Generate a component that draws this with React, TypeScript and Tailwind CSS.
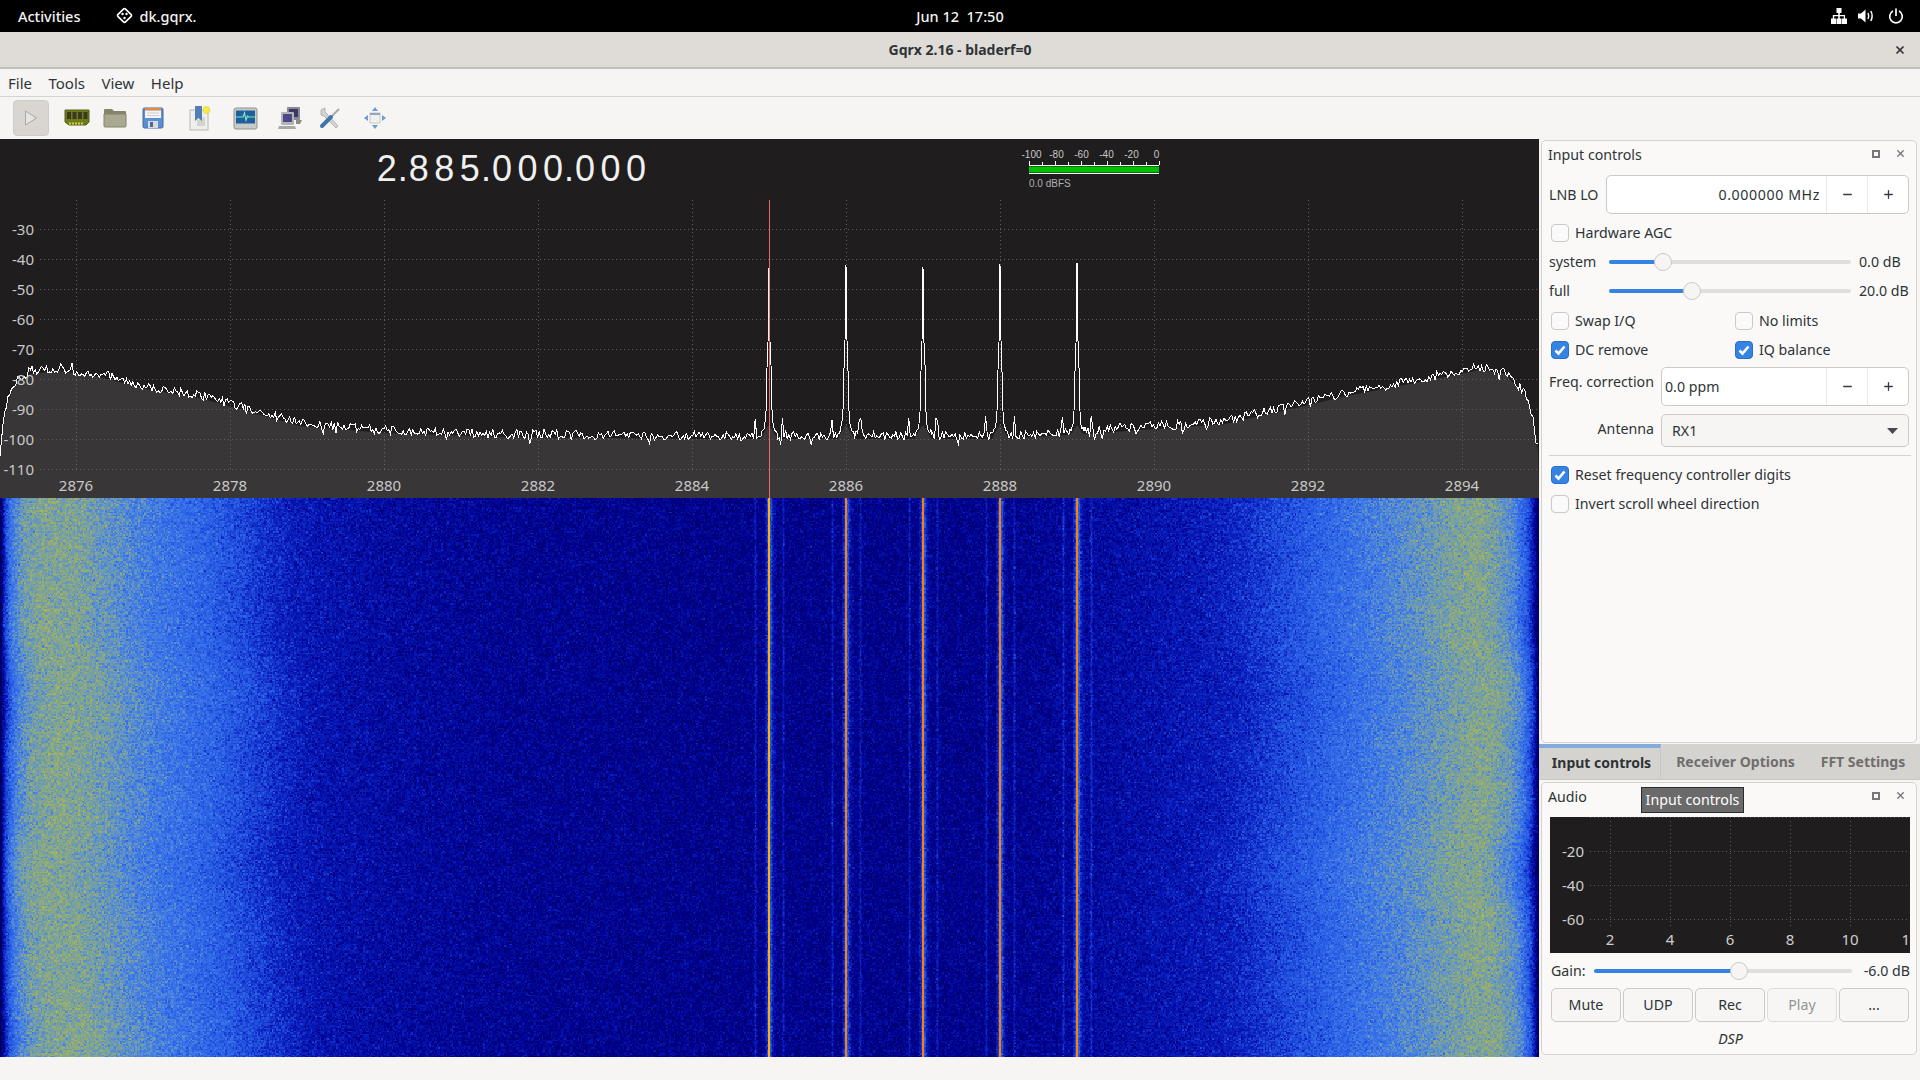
import { useEffect, useRef } from "react";
import { Minus, Plus, X } from "lucide-react";

const CARRIERS = [
  { x: 769, tip: 268 },
  { x: 846, tip: 265 },
  { x: 923, tip: 267 },
  { x: 1000, tip: 264 },
  { x: 1077, tip: 263 },
];

const ENVELOPE: [number, number][] = [
  [0, 453], [3, 425], [7, 403], [15, 382], [30, 372], [60, 369], [100, 375], [150, 388],
  [200, 396], [250, 410], [300, 424], [384, 431], [500, 435], [700, 437], [1000, 437],
  [1100, 431], [1225, 422], [1347, 394], [1420, 380], [1480, 368], [1505, 372], [1517, 385],
  [1528, 398], [1533, 420], [1536, 440], [1539, 452],
];

const makeRandom = (seed: number) => () => {
  seed = (seed + 0x6d2b79f5) | 0;
  let t = Math.imul(seed ^ (seed >>> 15), 1 | seed);
  t = (t + Math.imul(t ^ (t >>> 7), 61 | t)) ^ t;
  return ((t ^ (t >>> 14)) >>> 0) / 4294967296;
};

const envY = (x: number) => {
  for (let i = 1; i < ENVELOPE.length; i++) {
    const [x0, y0] = ENVELOPE[i - 1];
    const [x1, y1] = ENVELOPE[i];
    if (x <= x1) return y0 + ((y1 - y0) * (x - x0)) / (x1 - x0);
  }
  return 452;
};

// one trace sample, snapped so each carrier gets its own spike
const buildTrace = () => {
  const rnd = makeRandom(7);
  const xs: number[] = [];
  for (let x = 0; x < 1539; x += 1.6) {
    if (!CARRIERS.some((c) => Math.abs(x - c.x) < 8)) xs.push(x);
  }
  CARRIERS.forEach((c) => {
    for (let d = -8; d <= 8; d++) xs.push(c.x + d);
  });
  xs.sort((a, b) => a - b);
  const trace = xs.map((x) => {
    let y = envY(x) - 1 + (rnd() - 0.5) * 9;
    if (rnd() < 0.07) y += (rnd() - 0.35) * 13;
    CARRIERS.forEach((c) => {
      const d = Math.abs(x - c.x);
      if (d < 0.5) y = c.tip;
      else if (d <= 1) y = 340 + rnd() * 4;
      else if (d <= 2) y = 364 + rnd() * 8;
      else if (d <= 3) y = 409 + rnd() * 3;
      else if (d <= 8) y = Math.min(y, 437 - 22 * Math.exp(-(d - 3) / 3) + rnd() * 4);
      else if (Math.abs(d - 14) < 1) y = 416 + rnd() * 5;
    });
    return [x, y] as const;
  });
  return trace;
};

const TRACE = buildTrace();
const TRACE_POINTS = TRACE.map(([x, y]) => `${x.toFixed(1)},${y.toFixed(1)}`).join(" ");

const FILL_POINTS = (() => {
  const pts: string[] = ["0,498"];
  for (let x = 0; x <= 1539; x += 2) {
    let y = envY(x) + 2;
    CARRIERS.forEach((c) => {
      const d = Math.abs(x - c.x);
      if (d < 8) y = Math.min(y, 438 - 14 * (1 - d / 8));
    });
    pts.push(`${x},${y.toFixed(1)}`);
  }
  pts.push("1539,498");
  return pts.join(" ");
})();

const STOPS: [number, number, number, number][] = [
  [0, 0, 0, 70], [0.2, 0, 0, 140], [0.35, 10, 30, 190], [0.5, 35, 85, 225], [0.65, 60, 120, 235],
  [0.75, 100, 150, 195], [0.85, 140, 170, 125], [0.95, 170, 180, 90], [1, 190, 190, 70],
];

const colormap = (v: number) => {
  const t = Math.max(0, Math.min(1, v));
  for (let i = 1; i < STOPS.length; i++) {
    const a = STOPS[i - 1];
    const b = STOPS[i];
    if (t <= b[0]) {
      const f = (t - a[0]) / (b[0] - a[0]);
      return [a[1] + (b[1] - a[1]) * f, a[2] + (b[2] - a[2]) * f, a[3] + (b[3] - a[3]) * f];
    }
  }
  return [190, 190, 70];
};

const SPURS: Record<number, number> = {
  [-4]: 0.1, [-3]: 0.14, [-2]: 0.22, [-1]: 0.3, 1: 0.3, 2: 0.26, 3: 0.14, 4: 0.1, 5: 0.05,
  6: 0.04, 7: 0.03, [-13]: 0.07, [-14]: 0.14, [-15]: 0.06, 13: 0.07, 14: 0.13, 15: 0.06,
};

const Waterfall = () => {
  const ref = useRef<HTMLCanvasElement>(null);

  useEffect(() => {
    const canvas = ref.current;
    const ctx = canvas?.getContext("2d");
    if (!canvas || !ctx) return;
    const w = canvas.width;
    const h = canvas.height;
    const img = ctx.createImageData(w, h);
    const rnd = makeRandom(41);
    const gauss = () => (rnd() + rnd() + rnd() + rnd() - 2) * 0.9;
    const spurs = new Float32Array(w);
    const smooth = new Float32Array(w);
    for (let x = 0; x < w; x++) {
      CARRIERS.forEach((c) => {
        spurs[x] += SPURS[x - c.x] ?? 0;
      });
      const r = 18 * Math.min(1, x / 40, (w - x) / 40);
      smooth[x] = (envY(Math.max(0, x - r)) + envY(x) + envY(Math.min(w, x + r))) / 3;
    }
    const noise = new Float32Array(w);
    for (let row = 0; row < h; row++) {
      const wobble = Math.sin(row / 47) * 7 + Math.sin(row / 19 + 1) * 4;
      const fresh = row % 3 !== 1;
      let cell = 0;
      for (let x = 0; x < w; x++) {
        if (fresh) {
          if (x % 3 !== 1) cell = gauss();
          noise[x] = cell;
        }
        const fade = Math.min(1, x / 40, (w - x) / 40);
        const edge = x < 300 || x > 1200 ? wobble * fade : 0;
        const at = Math.max(0, Math.min(w - 1, Math.round(x + edge)));
        const base = 0.2 + (437 - smooth[at]) * 0.0094;
        const v = base + spurs[x] + noise[x] * 0.11;
        let [r, g, b] = colormap(v);
        const carrier = CARRIERS.findIndex((c) => x === c.x || x === c.x - 1);
        if (carrier === 0) [r, g, b] = [255, 176, 0];
        else if (carrier > 0) [r, g, b] = [255, 128, 0];
        const i = (row * w + x) * 4;
        img.data[i] = r;
        img.data[i + 1] = g;
        img.data[i + 2] = b;
        img.data[i + 3] = 255;
      }
    }
    ctx.putImageData(img, 0, 0);
  }, []);

  return <canvas ref={ref} width={1539} height={559} className="block w-[1539px] h-[559px]" />;
};

const Spectrum = () => {
  const dbs = [-30, -40, -50, -60, -70, -80, -90, -100, -110];
  const freqs = [2876, 2878, 2880, 2882, 2884, 2886, 2888, 2890, 2892, 2894];
  return (
    <svg width={1539} height={298} viewBox="0 200 1539 298" className="block bg-[#1f1d1e]">
      <polygon points={FILL_POINTS} fill="#383637" />
      <line x1={0} x2={1539} y1={199.5} y2={199.5} stroke="#5c5a5a" strokeDasharray="1 3" />
      {dbs.map((_, i) => (
        <line key={i} x1={40} x2={1539} y1={229.5 + i * 30} y2={229.5 + i * 30} stroke="#636161" strokeDasharray="1 3" />
      ))}
      {freqs.map((_, i) => (
        <line key={i} x1={76.5 + i * 154} x2={76.5 + i * 154} y1={200} y2={470} stroke="#636161" strokeDasharray="1 3" />
      ))}
      <polyline points={TRACE_POINTS} fill="none" stroke="#ffffff" strokeWidth={1} shapeRendering="crispEdges" />
      <line x1={769.5} x2={769.5} y1={200} y2={498} stroke="#ff7070" strokeWidth={1} opacity={0.9} />
      {dbs.map((db, i) => (
        <text key={db} x={34} y={234.5 + i * 30} textAnchor="end" fontSize={15} fill="#c9c8c8">
          {db}
        </text>
      ))}
      {freqs.map((f, i) => (
        <text key={f} x={76 + i * 154} y={491} textAnchor="middle" fontSize={15} fill="#c9c8c8">
          {f}
        </text>
      ))}
    </svg>
  );
};

const Meter = () => {
  const labels = [-100, -80, -60, -40, -20, 0];
  return (
    <svg width={150} height={61} viewBox="1020 139 150 61" className="block font-['Liberation_Sans',sans-serif]">
      {labels.map((l, i) => (
        <text key={l} x={1031.5 + i * 25} y={158} textAnchor="middle" fontSize={10} fill="#c8c8c8">
          {l}
        </text>
      ))}
      {Array.from({ length: 11 }, (_, i) => (
        <line key={i} x1={1029.5 + i * 13} x2={1029.5 + i * 13} y1={i % 2 ? 162 : 161} y2={165} stroke="#fff" />
      ))}
      <line x1={1029} x2={1159} y1={165.5} y2={165.5} stroke="#fff" />
      <rect x={1029} y={166.5} width={130} height={6} fill="#00c000" />
      <line x1={1029} x2={1159} y1={173.5} y2={173.5} stroke="#fff" />
      <text x={1029} y={187} fontSize={10} fill="#b0b0b0">
        0.0 dBFS
      </text>
    </svg>
  );
};

const FreqDisplay = () => (
  <div className="flex items-center -mt-[2px] text-[36px] leading-none text-[#f0f0f0] font-['Liberation_Sans',sans-serif]">
    {"2.885.000.000".split("").map((ch, i) =>
      ch === "." ? (
        <span key={i} className="w-[6.6px] flex justify-center">
          {ch}
        </span>
      ) : (
        <span key={i} className="w-[25.5px] flex justify-center">
          {ch}
        </span>
      ),
    )}
  </div>
);

const Check = ({ on, label, className = "" }: { on?: boolean; label: string; className?: string }) => (
  <div className={`flex items-center h-6 ${className}`}>
    <div
      className={`w-[18px] h-[18px] rounded-[4px] flex items-center justify-center ${
        on ? "bg-[#3584e4] border border-[#2a6fc4]" : "bg-[#fbfafa] border border-[#cdc9c4]"
      }`}
    >
      {on && (
        <svg width={14} height={14} viewBox="0 0 14 14">
          <path d="M2.5 7.5 L5.5 10.5 L11.5 3.5" fill="none" stroke="#fff" strokeWidth={2.6} />
        </svg>
      )}
    </div>
    <span className="ml-[6px] whitespace-nowrap">{label}</span>
  </div>
);

const Slider = ({ width, thumb }: { width: number; thumb: number }) => (
  <div className="relative h-1 rounded-full bg-[#e1dedb]" style={{ width }}>
    <div className="h-1 rounded-full bg-[#3584e4]" style={{ width: thumb }} />
    <div
      className="absolute top-[-7px] w-[18px] h-[18px] rounded-full bg-[#f6f5f4] border border-[#cdc9c4]"
      style={{ left: thumb - 9 }}
    />
  </div>
);

const SpinBox = ({ text, right, className = "" }: { text: string; right?: boolean; className?: string }) => (
  <div className={`h-[39px] flex rounded-[5px] border border-[#cdc9c4] bg-white overflow-hidden ${className}`}>
    <div className={`flex-1 flex items-center ${right ? "justify-end pr-[6px] tracking-[0.6px]" : "pl-[3px]"}`}>{text}</div>
    <div className="w-[41px] flex items-center justify-center border-l border-[#ebe9e7]">
      <Minus size={13} strokeWidth={2.4} className="text-[#3d3846]" />
    </div>
    <div className="w-[41px] flex items-center justify-center border-l border-[#ebe9e7]">
      <Plus size={13} strokeWidth={2.4} className="text-[#3d3846]" />
    </div>
  </div>
);

const DockTitle = ({ title }: { title: string }) => (
  <div className="flex items-center h-[29px] pl-[6px]">
    <span>{title}</span>
    <div className="ml-auto flex items-center pr-[10px] gap-[15px] mb-[2px]">
      <div className="w-[8px] h-[8px] border-2 border-[#77767b]" />
      <X size={11} strokeWidth={3} className="text-[#77767b]" />
    </div>
  </div>
);

const InputControls = () => (
  <div className="ml-[2px] w-[376px] h-[603px] mt-px rounded-[5px] border border-[#d6d3cf] bg-[#faf9f8] pl-[7px] flex flex-col">
    <div className="-ml-[7px] -mt-px">
      <DockTitle title="Input controls" />
    </div>
    <div className="mt-[6px] flex items-center w-[360px]">
      <span className="w-[57px]">LNB LO</span>
      <SpinBox text="0.000000 MHz" right className="flex-1" />
    </div>
    <Check label="Hardware AGC" className="mt-[7px] ml-[2px]" />
    <div className="mt-[5px] h-6 flex items-center">
      <span className="w-[60px]">system</span>
      <Slider width={242} thumb={54} />
      <span className="ml-[8px]">0.0 dB</span>
    </div>
    <div className="mt-[5px] h-6 flex items-center">
      <span className="w-[60px]">full</span>
      <Slider width={242} thumb={83} />
      <span className="ml-[8px]">20.0 dB</span>
    </div>
    <div className="mt-[6px] flex">
      <Check label="Swap I/Q" className="w-[184px] ml-[2px]" />
      <Check label="No limits" />
    </div>
    <div className="mt-[5px] flex">
      <Check on label="DC remove" className="w-[184px] ml-[2px]" />
      <Check on label="IQ balance" />
    </div>
    <div className="mt-[5px] flex w-[360px]">
      <span className="w-[112px] leading-[30px] whitespace-nowrap">Freq. correction</span>
      <SpinBox text="0.0 ppm" className="flex-1" />
    </div>
    <div className="mt-[8px] flex w-[360px]">
      <span className="w-[105px] text-right leading-[30px]">Antenna</span>
      <div className="ml-[7px] flex-1 h-[33px] flex items-center justify-between rounded-[5px] border border-[#cdc9c4] bg-[#f6f5f4] pl-[10px] pr-[10px]">
        <span>RX1</span>
        <svg width={11} height={6} viewBox="0 0 11 6">
          <path d="M0 0 H11 L5.5 6 Z" fill="#4a4850" />
        </svg>
      </div>
    </div>
    <div className="mt-[8px] h-px w-[362px] bg-[#d6d3cf]" />
    <Check on label="Reset frequency controller digits" className="mt-[7px] ml-[2px]" />
    <Check label="Invert scroll wheel direction" className="mt-[5px] ml-[2px]" />
  </div>
);

const Tabs = () => (
  <div className="mt-px h-[36px] flex bg-[#d5d3d0] text-[14px] font-bold border-b border-[#c9c6c2]">
    <div className="w-[122px] pl-[4px] pb-[2px] border-t-4 border-[#84abdd] border-r border-r-[#c9c6c2] text-[#2e3436] flex items-center justify-center">
      Input controls
    </div>
    <div className="w-[145px] pl-[4px] pb-px text-[#6f6e6d] pt-px flex items-center justify-center">Receiver Options</div>
    <div className="flex-1 text-[#6f6e6d] pb-px pt-px flex items-center justify-center">FFT Settings</div>
  </div>
);

const AudioPlot = () => (
  <svg width={360} height={136} viewBox="0 0 360 136" className="block bg-[#1f1d1e]">
    {[0, 34, 68, 102].map((y) => (
      <line key={y} x1={40} x2={360} y1={y + 0.5} y2={y + 0.5} stroke="#5f5d5d" strokeDasharray="1 3" />
    ))}
    {[60, 120, 180, 240, 300].map((x) => (
      <line key={x} x1={x + 0.5} x2={x + 0.5} y1={0} y2={112} stroke="#5f5d5d" strokeDasharray="1 3" />
    ))}
    {[-20, -40, -60].map((db, i) => (
      <text key={db} x={34} y={40 + i * 34} textAnchor="end" fontSize={15} fill="#cfcece">
        {db}
      </text>
    ))}
    {[2, 4, 6, 8, 10, 12].map((v, i) => (
      <text key={v} x={60 + i * 60} y={128} textAnchor="middle" fontSize={15} fill="#cfcece">
        {v}
      </text>
    ))}
  </svg>
);

const AudioPanel = () => (
  <div className="relative ml-[2px] mt-[2px] w-[376px] h-[273px] rounded-[5px] border border-[#d6d3cf] bg-[#faf9f8] flex flex-col">
    <div className="-mt-px">
      <DockTitle title="Audio" />
    </div>
    <div className="absolute left-[99px] top-[4px] w-[103px] h-[26px] flex items-center justify-center bg-[#6a6a6a] border border-[#2c2c2c] text-white">
      Input controls
    </div>
    <div className="mt-[6px] ml-[8px]">
      <AudioPlot />
    </div>
    <div className="mt-[6px] h-6 flex items-center pl-[9px]">
      <span className="w-[43px]">Gain:</span>
      <Slider width={258} thumb={145} />
      <span className="w-[58px] text-right whitespace-nowrap">-6.0 dB</span>
    </div>
    <div className="mt-[5px] ml-[9px] flex gap-[2px]">
      {["Mute", "UDP", "Rec", "Play", "..."].map((b) => (
        <div
          key={b}
          className={`w-[70px] h-[34px] flex items-center justify-center rounded-[5px] border bg-[#f7f6f5] ${
            b === "Play" ? "border-[#dedbd8] text-[#929595]" : "border-[#cdc9c4]"
          }`}
        >
          {b}
        </div>
      ))}
    </div>
    <div className="mt-[5px] pl-[3px] h-6 flex items-center justify-center italic">DSP</div>
  </div>
);

const RamIcon = () => (
  <svg width={26} height={18} viewBox="0 0 26 18" className="blur-[0.4px]">
    <path d="M1 1 H25 V13 L22 16 H5 L1 13 Z" fill="#6e7a1c" stroke="#55601a" />
    <rect x={3} y={3} width={4} height={7} fill="#3a3a20" />
    <rect x={8.5} y={3} width={4} height={7} fill="#3a3a20" />
    <rect x={14} y={3} width={4} height={7} fill="#3a3a20" />
    <rect x={19.5} y={3} width={4} height={7} fill="#3a3a20" />
    <path d="M5 14.5 H20" stroke="#d8d23a" strokeWidth={2} strokeDasharray="2 1" />
  </svg>
);

const FolderIcon = () => (
  <svg width={24} height={20} viewBox="0 0 24 20" className="blur-[0.4px]">
    <path d="M1 2 Q1 1 2 1 H9 L11 3 H22 Q23 3 23 4 V8 H1 Z" fill="#85836c" />
    <path d="M1 6 H23 V18 Q23 19 22 19 H2 Q1 19 1 18 Z" fill="#aaa88f" stroke="#85836c" />
  </svg>
);

const FloppyIcon = () => (
  <svg width={22} height={22} viewBox="0 0 22 22" className="blur-[0.4px]">
    <rect x={1} y={1} width={20} height={20} rx={1.5} fill="#5a8fd2" stroke="#44689f" />
    <rect x={3} y={1} width={16} height={2.5} fill="#e8883c" />
    <rect x={3} y={3.5} width={16} height={7.5} fill="#f4f4f2" />
    <path d="M5 6 H17 M5 8.5 H17" stroke="#cfcfcf" />
    <rect x={6} y={14} width={10} height={7} fill="#d8dadc" />
    <rect x={8} y={15} width={3} height={5} fill="#44689f" />
  </svg>
);

const BookmarkIcon = () => (
  <svg width={22} height={26} viewBox="0 0 22 26" className="blur-[0.4px]">
    <rect x={1} y={5} width={18} height={20} fill="#eeeeec" stroke="#b8b8b4" />
    <path d="M8 15 L16 12 V21 H8 Z" fill="#d2d2cf" />
    <path d="M6 1 H13 V16 L9.5 13 L6 16 Z" fill="#4f7fb4" />
    <circle cx={17.5} cy={5} r={3.5} fill="#f6ec3c" stroke="#e8d95a" />
  </svg>
);

const MonitorIcon = () => (
  <svg width={25} height={23} viewBox="0 0 25 23" className="blur-[0.4px]">
    <rect x={1} y={1} width={23} height={21} rx={2} fill="#c8ccc8" stroke="#8f938f" />
    <rect x={3} y={3.5} width={19} height={13} fill="#1f5f9c" />
    <path d="M3 10 H10 L11.5 6 L13 13 L14.5 9 L15.5 10 H22" fill="none" stroke="#7fe3c0" strokeWidth={1.2} />
  </svg>
);

const NetworkIcon = () => (
  <svg width={25} height={25} viewBox="0 0 25 25" className="blur-[0.4px]">
    <rect x={9} y={1} width={13} height={13} rx={1} fill="#8a8a90" />
    <rect x={11} y={3} width={9} height={8} fill="#3b3768" />
    <rect x={3} y={6} width={13} height={13} rx={1} fill="#b4b4b8" />
    <rect x={5} y={8} width={9} height={8} fill="#4c4788" />
    <path d="M1 20 H17 L18 23 H0 Z" fill="#a9a9a4" />
    <path d="M18 14 H24 L22 18 H18 Z" fill="#8d8d88" />
  </svg>
);

const ToolsIcon = () => (
  <svg width={22} height={22} viewBox="0 0 22 22" className="blur-[0.4px]">
    <path d="M2 3 L6 1 L6 5 L8 7 L19 19 L17 21 L5 9 L2 8 Z" fill="#d3d5d3" stroke="#9b9d9b" strokeWidth={0.7} />
    <path d="M20 2 L13 9" stroke="#a8aaa8" strokeWidth={2} />
    <path d="M12 10 L3 19" stroke="#3f74ad" strokeWidth={4} strokeLinecap="round" />
  </svg>
);

const MoveIcon = () => (
  <svg width={22} height={22} viewBox="0 0 22 22" className="blur-[0.4px]">
    <rect x={6} y={6} width={10} height={10} fill="#f0f0ee" stroke="#c9c9c5" />
    <rect x={6} y={6} width={10} height={2} fill="#8fa6c0" />
    <path d="M11 0 L14 4 H8 Z M11 22 L14 18 H8 Z M0 11 L4 8 V14 Z M22 11 L18 8 V14 Z" fill="#6b9bd2" />
  </svg>
);

const Toolbar = () => (
  <div className="h-[42px] flex items-center bg-[#f6f5f4]">
    <div className="ml-[13px] w-[36px] h-[36px] rounded-[4px] bg-[#d9d6d2] border border-[#cfccc8] flex items-center justify-center">
      <svg width={14} height={16} viewBox="0 0 14 16">
        <path d="M1.5 1 L12.5 8 L1.5 15 Z" fill="#e6e4e1" stroke="#a9a7a4" />
      </svg>
    </div>
    <div className="ml-[15px] flex items-center"><RamIcon /></div>
    <div className="ml-[13px] flex items-center"><FolderIcon /></div>
    <div className="ml-[15px] flex items-center"><FloppyIcon /></div>
    <div className="ml-[25px] flex items-center"><BookmarkIcon /></div>
    <div className="ml-[22px] flex items-center"><MonitorIcon /></div>
    <div className="ml-[20px] flex items-center"><NetworkIcon /></div>
    <div className="ml-[16px] flex items-center"><ToolsIcon /></div>
    <div className="ml-[23px] flex items-center"><MoveIcon /></div>
  </div>
);

const TopBar = () => (
  <div className="relative h-8 flex items-center pb-px bg-black text-[#f2f2f2] font-medium text-[14.5px]">
    <span className="ml-[18px]">Activities</span>
    <svg width={17} height={17} viewBox="0 0 17 17" className="ml-[36px]">
      <rect x={3.2} y={3.2} width={10.6} height={10.6} rx={1.5} transform="rotate(45 8.5 8.5)" fill="none" stroke="#fff" strokeWidth={1.6} />
      <circle cx={6.5} cy={7} r={1.2} fill="#fff" />
      <circle cx={10.5} cy={7} r={1.2} fill="#fff" />
      <circle cx={8.5} cy={11} r={1.2} fill="#fff" />
    </svg>
    <span className="ml-[6px]">dk.gqrx.</span>
    <span className="absolute left-0 right-0 text-center pointer-events-none">Jun 12{"\u00a0\u00a0"}17:50</span>
    <div className="ml-auto flex items-center">
      <svg width={16} height={16} viewBox="0 0 16 16">
        <path d="M5.5 0 H10.5 V5 H8.8 V7 H14 V10.5 H16 V16 H11 V10.5 H12.8 V8.2 H8.8 V10.5 H10.5 V16 H5.5 V10.5 H7.2 V8.2 H3.2 V10.5 H5 V16 H0 V10.5 H1.8 V7 H7.2 V5 H5.5 Z" fill="#fff" />
      </svg>
      <svg width={16} height={16} viewBox="0 0 16 16" className="ml-[11px]">
        <path d="M0 5.5 H3 L7.5 1.5 V14.5 L3 10.5 H0 Z" fill="#fff" />
        <path d="M10 5 Q11.5 8 10 11" fill="none" stroke="#fff" strokeWidth={1.5} />
        <path d="M12.8 3 Q15.5 8 12.8 13" fill="none" stroke="#fff" strokeWidth={1.5} />
      </svg>
      <svg width={16} height={16} viewBox="0 0 16 16" className="ml-[14px] mr-[16px]">
        <path d="M5 3 A6.3 6.3 0 1 0 11 3" fill="none" stroke="#fff" strokeWidth={1.7} />
        <path d="M8 0.5 V8" stroke="#fff" strokeWidth={1.7} />
      </svg>
    </div>
  </div>
);

export default function App() {
  return (
    <div className="w-[1920px] h-[1080px] flex flex-col overflow-hidden bg-[#f6f5f4] text-[14.2px] leading-5 text-[#2e3436] font-['Noto_Sans',sans-serif]">
      <TopBar />
      <div className="relative h-[37px] flex items-center justify-center bg-[#dfdcd8] border-b-2 border-[#c3c0ba] font-bold text-[14px] text-[#2e3436]">
        <span>Gqrx 2.16 - bladerf=0</span>
        <X size={12} strokeWidth={3.5} className="absolute right-[14px] top-[12px] text-[#2e3436]" />
      </div>
      <div className="h-[28px] flex items-center gap-[16.5px] pl-[8px] pt-px text-[15px] border-b border-[#d6d3cf]">
        <span>File</span>
        <span>Tools</span>
        <span>View</span>
        <span>Help</span>
      </div>
      <Toolbar />
      <div className="h-[918px] flex">
        <div className="w-[1539px] flex flex-col">
          <div className="h-[61px] flex items-center bg-[#1f1d1e]">
            <div className="w-[1020px] pl-[374px]">
              <FreqDisplay />
            </div>
            <Meter />
          </div>
          <Spectrum />
          <Waterfall />
        </div>
        <div className="flex-1 flex flex-col">
          <InputControls />
          <Tabs />
          <AudioPanel />
        </div>
      </div>
    </div>
  );
}
